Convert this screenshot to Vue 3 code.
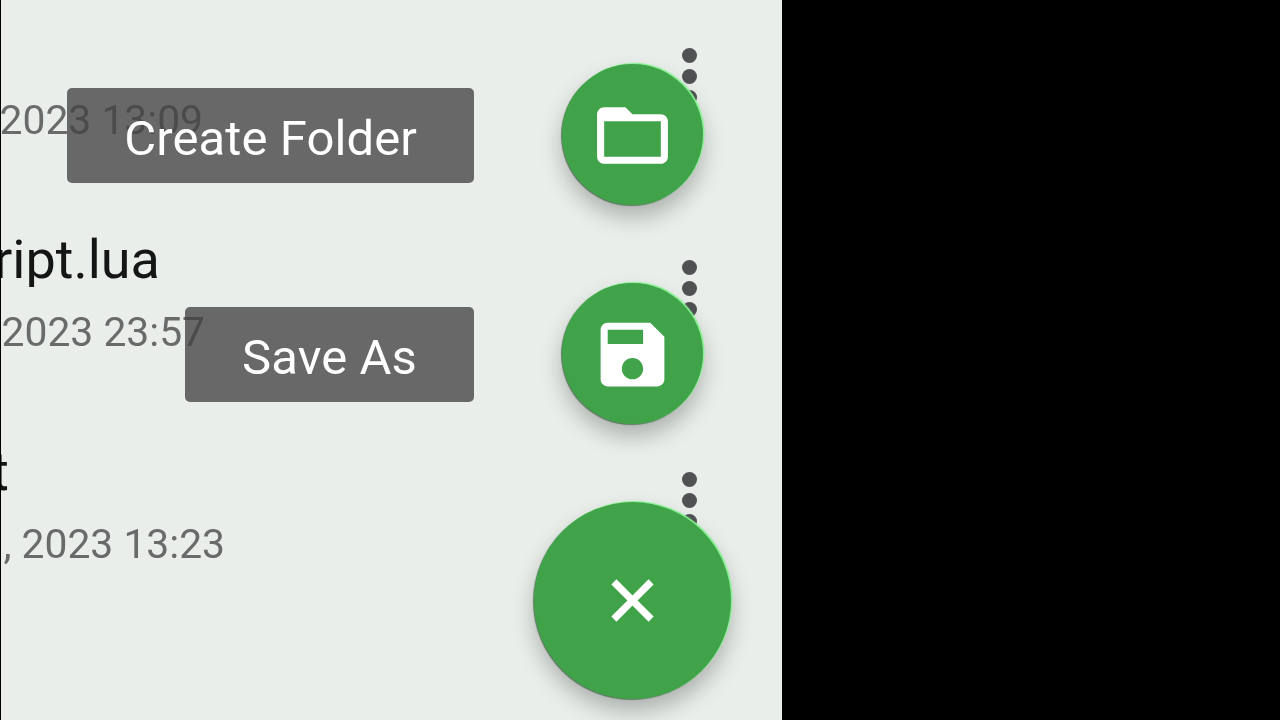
<script setup>
const rows = [
  { title: '', titleWidth: 0, date: '2023 13:09', dateWidth: 202 },
  { title: 'ript.lua', titleWidth: 159, date: '2023 23:57', dateWidth: 204 },
  { title: 't', titleWidth: 8, date: ', 2023 13:23', dateWidth: 224 }
]
</script>

<template>
  <main class="panel">
    <ul class="list">
      <li v-for="row in rows" :key="row.date" class="row">
        <div class="text">
          <div class="title" :style="{ width: row.titleWidth + 'px' }">{{ row.title }}</div>
          <div class="date" :style="{ width: row.dateWidth + 'px' }">{{ row.date }}</div>
        </div>
        <div class="kebab"><i></i><i></i><i></i></div>
      </li>
    </ul>

    <div class="dial">
      <span class="label">Create Folder</span>
      <button class="fab" aria-label="Create Folder">
        <svg class="icon-folder" viewBox="0 0 24 24"><path d="M20 6h-8l-2-2H4c-1.1 0-2 .9-2 2v12c0 1.1.9 2 2 2h16c1.1 0 2-.9 2-2V8c0-1.1-.9-2-2-2zm0 12H4V8h16v10z" /></svg>
      </button>
      <span class="label">Save As</span>
      <button class="fab" aria-label="Save As">
        <svg class="icon-save" viewBox="0 0 24 24"><path d="M17 3H5c-1.11 0-2 .9-2 2v14c0 1.1.89 2 2 2h14c1.1 0 2-.9 2-2V7l-4-4zm-5 16c-1.66 0-3-1.34-3-3s1.34-3 3-3 3 1.34 3 3-1.34 3-3 3zm3-10H5V5h10v4z" /></svg>
      </button>
      <span></span>
      <button class="fab fab-main" aria-label="Close">
        <svg class="icon-close" viewBox="0 0 24 24"><path d="M19 6.41L17.59 5 12 10.59 6.41 5 5 6.41 10.59 12 5 17.59 6.41 19 12 13.41 17.59 19 19 17.59 13.41 12z" /></svg>
      </button>
    </div>
  </main>
</template>

<style scoped>
.panel {
  position: relative;
  width: 781px;
  height: 720px;
  margin-left: 1px;
  overflow: hidden;
  background: #e9eeea;
  font-family: Roboto, "Liberation Sans", sans-serif;
  filter: blur(0.35px);
}
.list {
  margin: 0;
  padding: 21px 0 0;
  list-style: none;
  will-change: transform;
}
.row {
  display: flex;
  justify-content: space-between;
  height: 212px;
  padding-right: 85.5px;
  box-sizing: border-box;
}
.title,
.date {
  display: flex;
  justify-content: flex-end;
  overflow: hidden;
  white-space: nowrap;
}
.title {
  height: 54px;
  line-height: 54px;
  font-size: 54px;
  color: #151515;
}
.date {
  height: 47px;
  margin-top: 22px;
  line-height: 47px;
  font-size: 40.8px;
  color: #6a6a6a;
}
.kebab {
  display: flex;
  flex-direction: column;
  gap: 6px;
  margin-top: 27px;
}
.kebab i {
  width: 15px;
  height: 15px;
  border-radius: 50%;
  background: #4f5152;
}
.dial {
  position: absolute;
  top: 64px;
  left: 0;
  width: 730px;
  display: grid;
  grid-template-columns: 1fr 197px;
  column-gap: 60px;
  row-gap: 78px;
  align-items: center;
  justify-items: end;
  will-change: transform;
}
.label {
  height: 95px;
  margin-top: 1px;
  padding: 6px 57px 0;
  box-sizing: border-box;
  display: flex;
  align-items: center;
  border-radius: 5px;
  background: rgba(67, 67, 67, 0.79);
  color: #fff;
  font-size: 49px;
  letter-spacing: 0.1px;
  white-space: nowrap;
}
.fab {
  justify-self: center;
  width: 141px;
  height: 141px;
  padding: 0;
  border: 0;
  border-radius: 50%;
  display: flex;
  align-items: center;
  justify-content: center;
  background: #40a34a;
  box-shadow: 1.5px -1px 1px #86f090, -1px 1px 1px #5a7a5e, 0 12px 22px rgba(0, 0, 0, 0.26);
}
.fab-main {
  width: 197px;
  height: 197px;
}
.fab svg {
  fill: #fff;
  display: block;
}
.icon-folder {
  width: 85px;
  height: 85px;
  margin-top: 2px;
}
.icon-save {
  width: 85px;
  height: 85px;
  margin-top: 2px;
}
.icon-close {
  width: 69px;
  height: 69px;
  stroke: #fff;
  stroke-width: 0.5;
}
</style>

<style>
html,
body {
  background: #000;
}
</style>
